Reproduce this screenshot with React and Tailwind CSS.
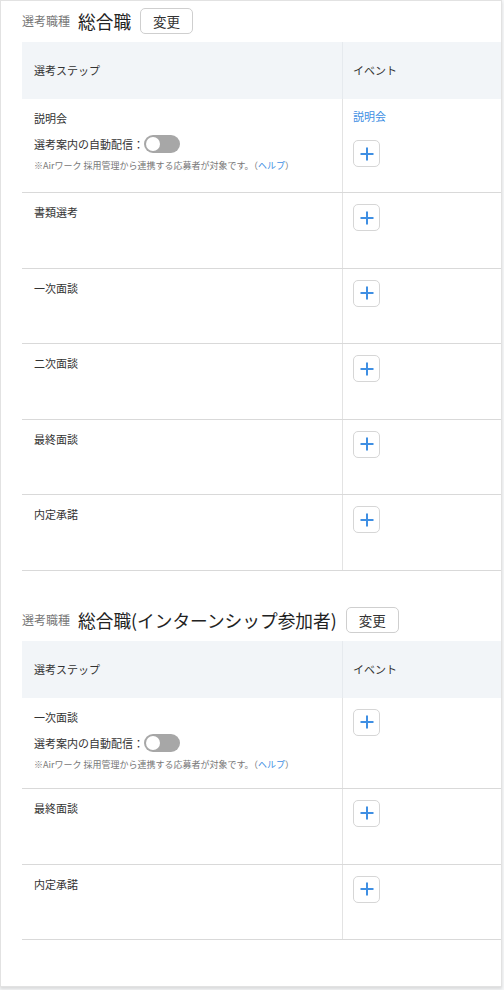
import React from "react";

const FONT = { fontFamily: '"Noto Sans CJK JP", "Noto Sans", sans-serif' };

function PlusButton() {
  return (
    <button className="flex h-[27px] w-[27px] items-center justify-center rounded-[5px] border border-[#d6d6d6] bg-white">
      <svg width="14" height="14" viewBox="0 0 14 14" fill="none">
        <path d="M7 0.5V13.5M0.5 7H13.5" stroke="#3f8fe3" strokeWidth="2" />
      </svg>
    </button>
  );
}

function Toggle() {
  return (
    <span className="relative inline-block h-[18px] w-[36px] rounded-full bg-[#a7a7a7]">
      <span className="absolute left-[2px] top-[2px] h-[14px] w-[14px] rounded-full bg-white" />
    </span>
  );
}

function Row({ label, withToggle, eventLink }) {
  return (
    <div className="grid grid-cols-[320px_1fr] border-b border-[#d9d9d9]">
      <div className="min-h-[74.6px] pl-[12px] pt-[10px] pb-[17px]">
        <div className="text-[11px] leading-[18px] text-[#333]">{label}</div>
        {withToggle && (
          <>
            <div className="mt-[8px] flex h-[18px] items-center text-[11px] text-[#333]">
              <span>選考案内の自動配信：</span>
              <Toggle />
            </div>
            <div className="mt-[6px] text-[9px] leading-[13px] text-[#777]">
              ※Airワーク 採用管理から連携する応募者が対象です。（<span className="text-[#3f8fe3]">ヘルプ</span>）
            </div>
          </>
        )}
      </div>
      <div className="border-l border-[#e3e3e3] pl-[10px] pt-[11px] pb-4">
        {eventLink && (
          <div className="-mt-[3px] mb-[15px] text-[11px] leading-[18px] text-[#3f8fe3]">{eventLink}</div>
        )}
        <div className={eventLink ? "mb-[9px]" : ""}>
          <PlusButton />
        </div>
      </div>
    </div>
  );
}

function Section({ title, rows, className }) {
  return (
    <div className={className}>
      <div className="flex h-[26px] items-center">
        <span className="text-[12px] text-[#777]">選考職種</span>
        <span className="ml-[8px] text-[17.7px] font-normal text-[#222]">{title}</span>
        <button className="ml-[9px] flex h-[26px] items-center rounded-[5px] border border-[#cfcfcf] bg-white px-[12px] text-[13.5px] text-[#333]">
          変更
        </button>
      </div>
      <div className="mt-[8px]">
        <div className="grid h-[57px] grid-cols-[320px_1fr] bg-[#f2f5f8]">
          <div className="flex items-center pl-[12px] text-[11px] text-[#333]">選考ステップ</div>
          <div className="flex items-center border-l border-[#e6eaee] pl-[10px] text-[11px] text-[#333]">イベント</div>
        </div>
        {rows.map((r, i) => (
          <Row key={i} {...r} />
        ))}
      </div>
    </div>
  );
}

export default function App() {
  return (
    <div className="h-[990px] w-[504px] bg-[#f6f7f8]" style={FONT}>
      <div className="h-[987px] w-[502px] border border-[#e2e2e2] bg-white pl-[21px] pt-[7px] shadow-[0_2px_3px_rgba(0,0,0,0.12)]">
        <Section
          title="総合職"
          rows={[
            { label: "説明会", withToggle: true, eventLink: "説明会" },
            { label: "書類選考" },
            { label: "一次面談" },
            { label: "二次面談" },
            { label: "最終面談" },
            { label: "内定承諾" },
          ]}
        />
        <Section
          className="mt-[36px]"
          title="総合職(インターンシップ参加者)"
          rows={[
            { label: "一次面談", withToggle: true },
            { label: "最終面談" },
            { label: "内定承諾" },
          ]}
        />
      </div>
    </div>
  );
}
